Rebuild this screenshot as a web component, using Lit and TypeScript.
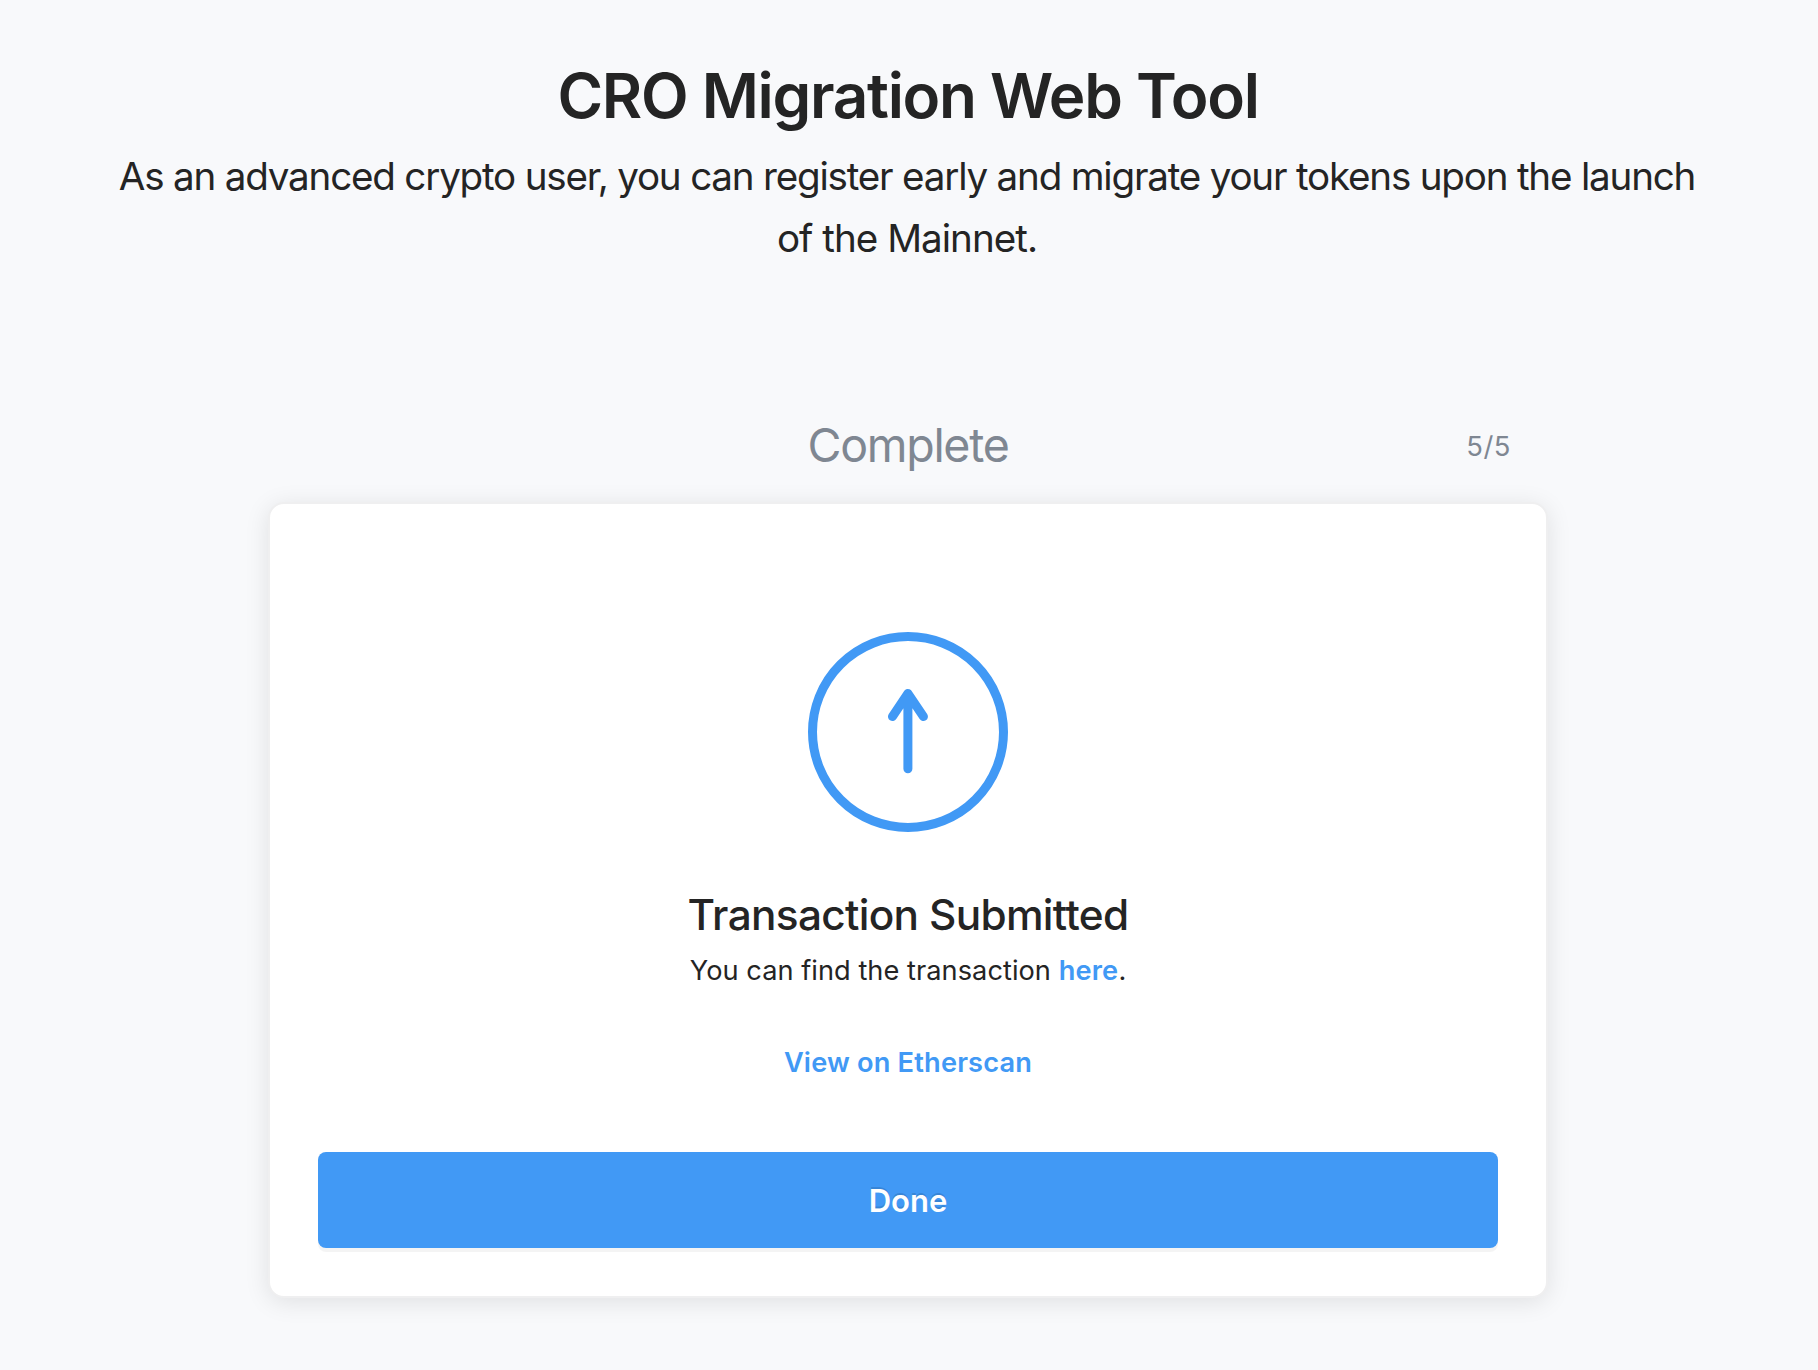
import { LitElement, html, css } from "lit";

class StatusIcon extends LitElement {
  static styles = css`
    :host { display: block; width: 200px; height: 200px; }
    .icon { display: block; }
  `;
  render() {
    return html`
      <svg class="icon" width="200" height="200" viewBox="0 0 200 200" fill="none"
        stroke="#4199f5" stroke-width="9" stroke-linecap="round" stroke-linejoin="round">
        <circle cx="100" cy="100" r="95.5" />
        <path d="M99.9 136.8V61.5M84.5 84.6L99.9 61.5L115.4 84.6" />
      </svg>
    `;
  }
}
customElements.define("status-icon", StatusIcon);

class AppRoot extends LitElement {
  static styles = css`
    :host {
      display: block;
      box-sizing: border-box;
      width: 100%;
      min-height: 1370px;
      padding: 58px 2px 0 0;
      overflow: hidden;
      background: #f8f9fb;
      color: #242424;
      font-family: Inter, "Liberation Sans", sans-serif;
      text-align: center;
    }
    h1, h2, h3, p { margin: 0; }
    .title { font-size: 62px; line-height: 76px; font-weight: 600; letter-spacing: -1.29px; }
    .subtitle { margin-top: 11px; padding-right: 2px; font-size: 38.6px; line-height: 62px; letter-spacing: -1.2px; white-space: nowrap; }
    .subtitle-line { display: block; }
    .subtitle-line.last { letter-spacing: -0.97px; }
    .steps {
      display: grid;
      grid-template-columns: 1fr auto 1fr;
      align-items: center;
      box-sizing: border-box;
      width: 1280px;
      margin: 140px auto 0;
      padding-right: 37px;
      padding-left: 37px;
      color: #7f8792;
    }
    .step-name { grid-column: 2; font-size: 46.5px; line-height: 72px; font-weight: 400; letter-spacing: -1.3px; }
    .step-count { justify-self: end; padding-top: 2px; font-size: 27.4px; letter-spacing: 0.5px; }
    .card {
      display: flex;
      flex-direction: column;
      align-items: center;
      box-sizing: border-box;
      width: 1280px;
      height: 796px;
      margin: 21px auto 0;
      padding: 128px 48px 48px;
      border: 2px solid #efeff0;
      border-radius: 16px;
      background: #fff;
      box-shadow: 0 4px 24px rgba(0, 0, 0, 0.1);
    }
    .heading { margin-top: 55px; font-size: 42.3px; line-height: 56px; font-weight: 500; letter-spacing: -0.66px; }
    .note { margin-top: 6px; font-size: 27.2px; line-height: 44px; letter-spacing: 0.04px; }
    .link { color: #4199f5; font-weight: 600; letter-spacing: 0.18px; text-decoration: none; }
    .explorer { margin-top: 48px; font-size: 27.2px; line-height: 44px; }
    .done {
      align-self: stretch;
      height: 96px;
      margin-top: auto;
      padding: 2px 0 0;
      border: 0;
      border-radius: 8px;
      background: #4199f5;
      color: #fff;
      font: 600 31px/94px Inter, "Liberation Sans", sans-serif;
      letter-spacing: 0;
      text-shadow: 0 -2px 0 rgba(0, 0, 0, 0.12);
      box-shadow: 0 4px 0 rgba(0, 0, 0, 0.045);
    }
  `;
  render() {
    return html`
      <h1 class="title">CRO Migration Web Tool</h1>
      <p class="subtitle">
        <span class="subtitle-line">As an advanced crypto user, you can register early and migrate your tokens upon the launch</span>
        <span class="subtitle-line last">of the Mainnet.</span>
      </p>
      <div class="steps">
        <h2 class="step-name">Complete</h2>
        <span class="step-count">5/5</span>
      </div>
      <section class="card">
        <status-icon></status-icon>
        <h3 class="heading">Transaction Submitted</h3>
        <p class="note">You can find the transaction <a class="link" href="#">here</a>.</p>
        <a class="link explorer" href="#">View on Etherscan</a>
        <button class="done">Done</button>
      </section>
    `;
  }
}
customElements.define("app-root", AppRoot);
